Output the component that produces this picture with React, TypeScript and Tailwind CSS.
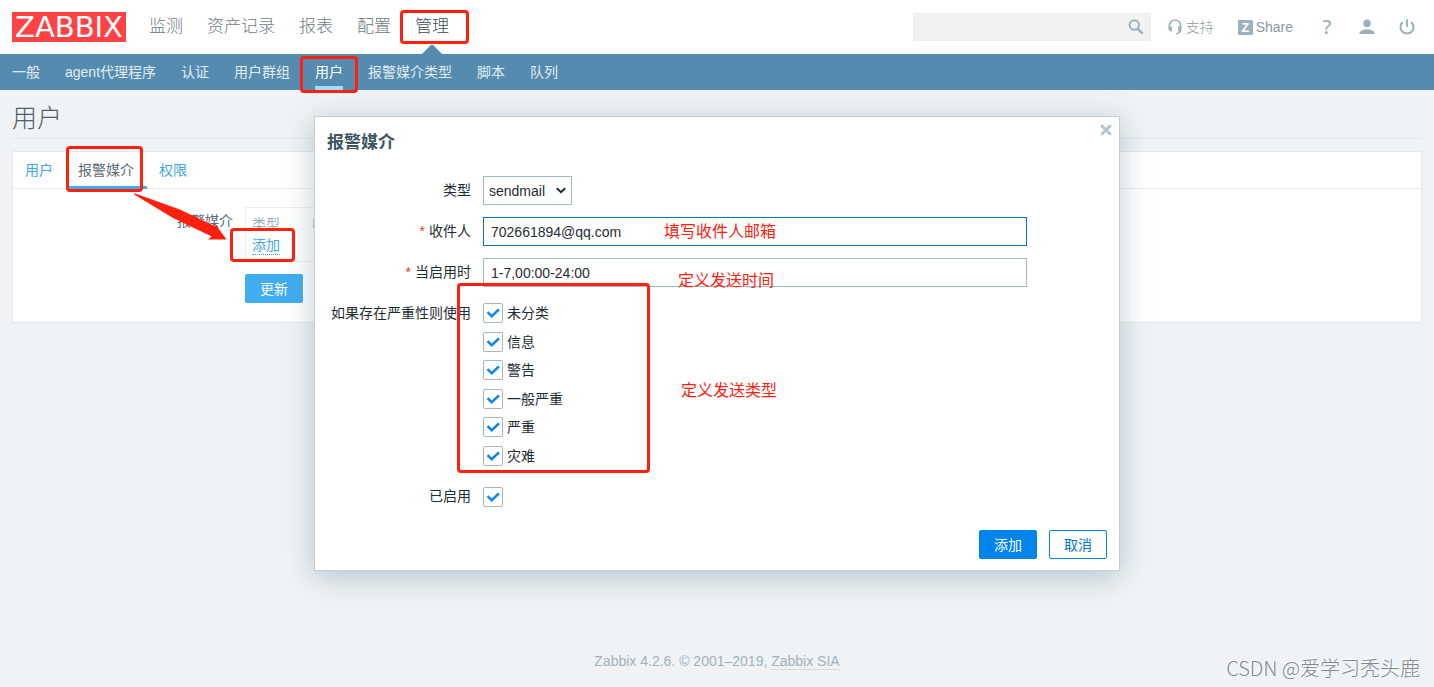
import React from 'react';
import clsx from 'clsx';

const mainNav = ['监测', '资产记录', '报表', '配置', '管理'];
const subNav = ['一般', 'agent代理程序', '认证', '用户群组', '用户', '报警媒介类型', '脚本', '队列'];
const tabs = ['用户', '报警媒介', '权限'];
const severities = ['未分类', '信息', '警告', '一般严重', '严重', '灾难'];

function Mark({ className }: { className: string }) {
  return (
    <span
      aria-hidden="true"
      className={clsx('pointer-events-none absolute z-10 rounded-[4px] border-3 border-[#ff2010]', className)}
    />
  );
}

function Note({ className, children }: { className: string; children: React.ReactNode }) {
  return (
    <span className={clsx('pointer-events-none absolute z-10 text-base leading-[22px] whitespace-nowrap text-[#ff2010]', className)}>
      {children}
    </span>
  );
}

function Checkbox({ id, label }: { id: string; label?: string }) {
  return (
    <div className="flex items-center gap-1">
      <span className="grid size-5 shrink-0">
        <input
          id={id}
          type="checkbox"
          defaultChecked
          className="peer col-start-1 row-start-1 size-5 appearance-none rounded-[2px] border border-[#a4b8c4] bg-white"
        />
        <svg
          viewBox="0 0 20 20"
          className="pointer-events-none invisible col-start-1 row-start-1 size-5 peer-checked:visible"
        >
          <path d="M4.600 9.200l4.100 4.100 7.300-6.900" fill="none" stroke="#0a87ea" strokeWidth="2.600" />
        </svg>
      </span>
      {label && <label htmlFor={id}>{label}</label>}
    </div>
  );
}

function FieldLabel({ htmlFor, required, children }: { htmlFor: string; required?: boolean; children: React.ReactNode }) {
  return (
    <label htmlFor={htmlFor} className="w-36 shrink-0 text-right leading-[29px] whitespace-nowrap">
      {required && <span className="mr-1 text-[#e33734]">*</span>}
      {children}
    </label>
  );
}

function Header() {
  return (
    <header>
      <div className="flex h-[54px] items-center bg-white pr-[19px] pl-3">
        <a
          href="#"
          className="flex h-[30px] w-[114px] items-center justify-center bg-[#ff4344] font-['DejaVu_Sans',sans-serif] text-[29px] leading-none text-white"
        >
          ZABBIX
        </a>
        <nav className="ml-[23px] flex h-full gap-6 text-[17px] font-light text-[#6f7b82]">
          {mainNav.map((item) => (
            <a
              key={item}
              href="#"
              className={clsx('relative flex h-full items-center', item === '管理' && 'text-[#3f4d56]')}
            >
              {item}
              {item === '管理' && (
                <>
                  <svg viewBox="0 0 20 10" className="absolute bottom-0 left-1/2 h-[10px] w-5 -translate-x-1/2">
                    <path d="M0 10L8.400 1.400q1.600-1.400 3.200 0L20 10z" fill="#548bae" />
                  </svg>
                  <Mark className="top-[10px] -right-5 -left-[15px] h-[34px]" />
                </>
              )}
            </a>
          ))}
        </nav>

        <form className="mr-[17px] ml-auto flex h-7 w-[238px] items-center border border-[#ededed] bg-[#f2f2f2] pr-[6px]">
          <input type="search" aria-label="搜索" className="h-full min-w-0 flex-1 bg-transparent px-2 text-sm outline-none" />
          <button type="button" aria-label="搜索">
            <svg viewBox="0 0 16 16" className="block size-4" fill="none" stroke="#9cb1bc">
              <circle cx="6.300" cy="6" r="4.700" strokeWidth="2" />
              <path d="M9.600 9.600l5 5" strokeWidth="2.600" />
            </svg>
          </button>
        </form>
        <div className="flex items-center gap-6 text-sm text-[#8e999f]">
          <a href="#" className="flex items-center gap-1 font-light">
            <svg viewBox="0 0 14 16" className="h-4 w-[14px]">
              <path d="M1.400 8.500V6.300a5.600 5.300 0 0 1 11.200 0v2.200" fill="none" stroke="#9cb1bc" strokeWidth="1.700" />
              <path d="M.5 7.400h3.400v5H2.400Q.5 12 .5 10zM13.500 7.400h-3.400v5h1.500q1.900-.4 1.900-2.400z" fill="#9cb1bc" />
              <path d="M12.700 10.500q-.1 3.900-4.900 4.300" fill="none" stroke="#9cb1bc" strokeWidth="1.500" />
            </svg>
            支持
          </a>
          <a href="#" className="flex items-center gap-[3px]">
            <span className="flex size-[15px] items-center justify-center rounded-[1px] bg-[#9cb1bc] text-[13px] leading-none font-bold text-white">
              Z
            </span>
            Share
          </a>
          <a href="#" aria-label="帮助" className="ml-[2px] w-4 text-center font-['Noto_Sans',sans-serif] text-xl leading-none font-medium text-[#9cb1bc]">
            ?
          </a>
          <a href="#" aria-label="个人资料">
            <svg viewBox="0 0 16 16" className="block size-4" fill="#9cb1bc">
              <ellipse cx="8" cy="4.300" rx="3.700" ry="3.900" />
              <path d="M.5 15v-1.800Q3 10.200 8 10.200t7.500 3V15z" />
            </svg>
          </a>
          <a href="#" aria-label="登出">
            <svg viewBox="0 0 16 16" className="block size-4" fill="none" stroke="#9cb1bc" strokeWidth="2">
              <path d="M3.900 3a6.500 6.500 0 1 0 8.200 0M8 .4v7.300" />
            </svg>
          </a>
        </div>
      </div>

      <nav className="flex h-9 gap-[25px] bg-[#548bae] px-3 text-sm text-[#e3edf3]">
        {subNav.map((item) => (
          <a
            key={item}
            href="#"
            className={clsx(
              'relative flex items-center border-y-4 border-transparent',
              item === '用户' && 'border-b-[#9be0fc] text-white',
            )}
          >
            {item}
            {item === '用户' && <Mark className="-inset-x-[15px] -top-[2px] -bottom-[7px]" />}
          </a>
        ))}
      </nav>
    </header>
  );
}

function MediaTab() {
  return (
    <section className="mt-3 border border-[#e2e8eb] bg-white text-sm text-[#5c6a73]">
      <div role="tablist" className="flex h-[37px] border-b border-[#e9edef]">
        {tabs.map((tab) => (
          <button
            key={tab}
            type="button"
            role="tab"
            aria-selected={tab === '报警媒介'}
            className={clsx(
              'relative -mb-px border-b-3 pt-[2px] pr-[13px] pl-3',
              tab === '报警媒介' ? 'border-[#3fabef]' : 'border-transparent text-[#40a6e6]',
            )}
          >
            {tab}
            {tab === '报警媒介' && (
              <>
                <Mark className="-top-[6px] right-1 -bottom-[6px] left-0" />
                <svg viewBox="0 0 94 50" className="pointer-events-none absolute top-[41px] left-[67px] z-20 h-[50px] w-[94px]">
                  <path d="M1.500 .3L47 16.500 81.500 33l2-.5 10 14.100-18.300-.2 1-1.200 2.600-1.700L40 25 1.200 1.500z" fill="#ff2010" />
                </svg>
              </>
            )}
          </button>
        ))}
      </div>
      <div className="flex gap-3 pt-[18px] pb-[19px]">
        <div className="w-[220px] text-right leading-7">报警媒介</div>
        <div>
          <div className="border border-[#eaeef0] py-[5px]">
            <table className="border-collapse">
              <thead>
                <tr className="h-[21px] text-left text-[#a1afb8]">
                  <th className="w-[60px] pl-[6px] font-normal">类型</th>
                  <th className="w-[120px] pl-[6px] font-normal">收件人</th>
                </tr>
              </thead>
              <tbody>
                <tr className="h-[22px]">
                  <td className="pl-[6px]" colSpan={2}>
                    <span className="relative inline-block">
                      <button type="button" className="block border-b border-dotted border-[#40a6e6] leading-[18px] text-[#40a6e6]">
                        添加
                      </button>
                      <Mark className="-top-2 -right-[15px] -left-[22px] h-[34px]" />
                    </span>
                  </td>
                </tr>
              </tbody>
            </table>
          </div>
          <button type="button" className="mt-3 h-[29px] rounded-[2px] bg-[#40adf0] px-[15px] text-white">
            更新
          </button>
        </div>
      </div>
    </section>
  );
}

function MediaDialog() {
  return (
    <div
      role="dialog"
      aria-labelledby="media-title"
      className="absolute inset-x-0 top-[116px] z-30 mx-auto w-[806px] max-w-full border border-[#c3d0d7] bg-white px-3 pt-[13px] pb-[11px] text-sm text-[#1f2c33] shadow-[0_6px_28px_rgba(70,110,130,0.35)]"
    >
      <button type="button" aria-label="关闭" className="absolute top-[7px] right-[7px]">
        <svg viewBox="0 0 12 12" className="block size-3" stroke="#b4c5ce" strokeWidth="3">
          <path d="M1.200 1.200l9.600 9.600M10.800 1.200l-9.600 9.600" />
        </svg>
      </button>
      <h2 id="media-title" className="mb-5 text-[17px] leading-[26px] font-bold text-[#3c5563]">
        报警媒介
      </h2>

      <form>
        <div className="flex flex-col gap-3">
          <div className="flex gap-3">
            <FieldLabel htmlFor="media-type">类型</FieldLabel>
            <div className="relative">
              <select id="media-type" className="h-[29px] w-[89px] appearance-none border border-[#a4b8c4] bg-white pl-[5px]">
                <option>sendmail</option>
              </select>
              <svg viewBox="0 0 10 7" className="pointer-events-none absolute top-[11px] right-[6px] h-[7px] w-[10px]">
                <path d="M.8 1.200L5 5.200l4.200-4" fill="none" stroke="#1f2c33" strokeWidth="2" />
              </svg>
            </div>
          </div>
          <div className="flex gap-3">
            <FieldLabel htmlFor="sendto" required>收件人</FieldLabel>
            <div className="relative">
              <input
                id="sendto"
                type="text"
                defaultValue="702661894@qq.com"
                className="h-[29px] w-[544px] border border-[#0f72b8] px-[7px] outline-none"
              />
              <Note className="top-1 left-[181px]">填写收件人邮箱</Note>
            </div>
          </div>
          <div className="flex gap-3">
            <FieldLabel htmlFor="period" required>当启用时</FieldLabel>
            <div className="relative">
              <input
                id="period"
                type="text"
                defaultValue="1-7,00:00-24:00"
                className="h-[29px] w-[544px] border border-[#a4b8c4] px-[7px] outline-none"
              />
              <Note className="top-3 left-[195px]">定义发送时间</Note>
            </div>
          </div>
          <div className="flex gap-3">
            <FieldLabel htmlFor="severity-0">如果存在严重性则使用</FieldLabel>
            <div className="relative grid h-[171px] grid-rows-6">
              {severities.map((s, i) => (
                <Checkbox key={s} id={`severity-${i}`} label={s} />
              ))}
              <Mark className="-top-4 -left-[26px] h-[190px] w-[193px]" />
              <Note className="top-[81px] left-[198px]">定义发送类型</Note>
            </div>
          </div>
          <div className="flex gap-3">
            <FieldLabel htmlFor="enabled">已启用</FieldLabel>
            <Checkbox id="enabled" />
          </div>
        </div>

        <div className="mt-[19px] flex justify-end gap-3">
          <button type="button" className="h-[29px] rounded-[2px] border border-[#0285ea] bg-[#0285ea] px-[14px] text-white">
            添加
          </button>
          <button type="button" className="h-[29px] rounded-[2px] border border-[#0285ea] bg-white px-[14px] text-[#0275d0]">
            取消
          </button>
        </div>
      </form>
    </div>
  );
}

export default function App() {
  return (
    <div
      lang="zh-CN"
      className="relative flex min-h-screen flex-col bg-[#eff3f6] font-['Liberation_Sans','Noto_Sans_CJK_SC',sans-serif]"
    >
      <Header />
      <main className="flex-1 px-3">
        <h1 className="border-b border-[#e3e8eb] pt-[9px] pb-px text-[25px] leading-[38px] font-light text-[#4f5d66]">用户</h1>
        <MediaTab />
      </main>
      <footer className="pb-4 text-center text-sm text-[#9eb2be]">
        Zabbix 4.2.6. © 2001–2019,{' '}
        <a href="#" className="border-b border-[#d3dce1]">
          Zabbix SIA
        </a>
      </footer>
      <MediaDialog />
      <div className="pointer-events-none absolute right-[14px] bottom-[5px] font-['Noto_Sans_CJK_SC',sans-serif] text-xl font-light text-[#85888a] [text-shadow:-1px_-1px_0_#ffffff]">
        CSDN @爱学习秃头鹿
      </div>
    </div>
  );
}
